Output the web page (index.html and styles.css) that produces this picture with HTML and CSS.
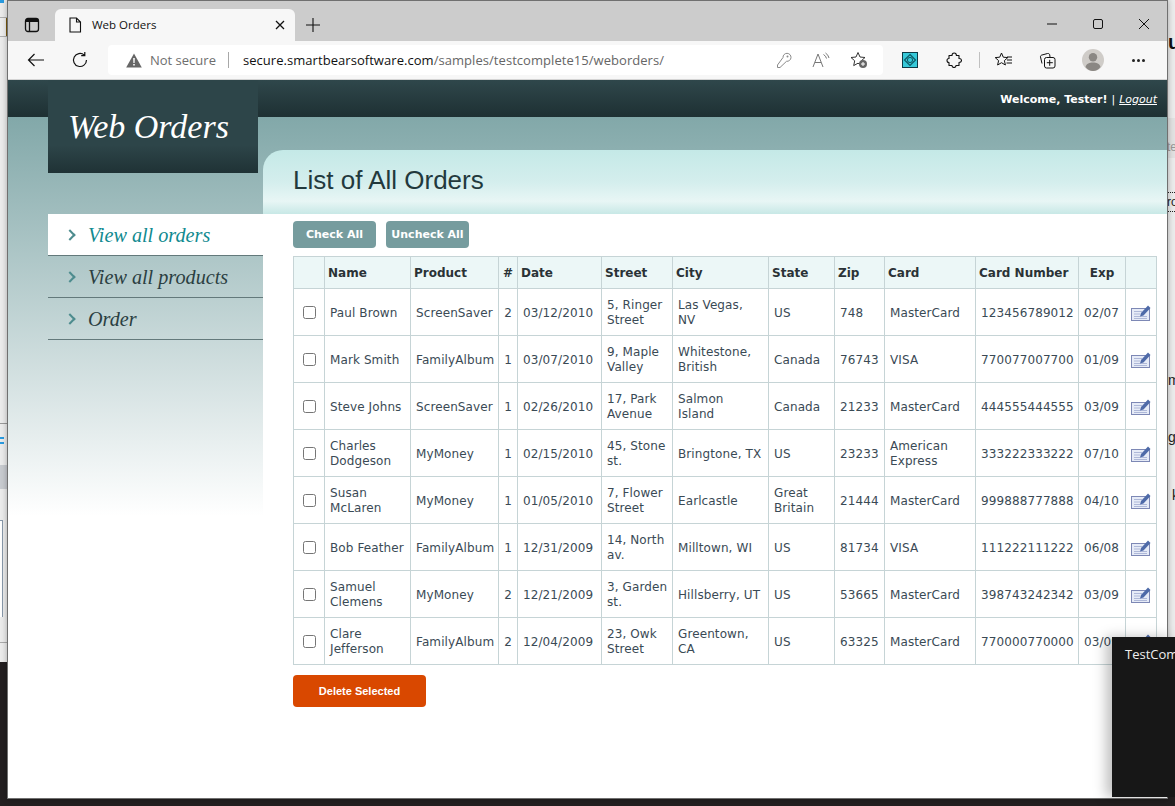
FILE: index.html
```html
<!DOCTYPE html>
<html lang="en">
<head>
<meta charset="utf-8">
<title>Web Orders</title>
<link rel="stylesheet" href="styles.css">
</head>
<body>
<div class="desktop">
  <div class="left-sliver">
    <span class="ls-blue"></span>
    <span class="ls-box"></span>
    <span class="ls-line"></span>
    <span class="ls-lines"></span>
    <span class="ls-band"></span>
    <span class="ls-frame"></span>
    <span class="ls-line2"></span>
  </div>
  <div class="right-sliver">
    <span class="rs-u">u</span>
    <span class="rs-band">te</span>
    <span class="rs-box">ro</span>
    <span class="rs-m">m</span>
    <span class="rs-g">g</span>
    <span class="rs-k">k</span>
  </div>
  <div class="window">
    <div class="tabstrip">
      <svg class="ic tabs-ic" viewBox="0 0 16 16" width="16" height="16"><rect x="1.500" y="1.500" width="13" height="13" rx="2.500" fill="none" stroke="#111" stroke-width="1.300"/><path d="M5.500 5v9" stroke="#111" stroke-width="1.300" fill="none"/><path d="M2 2h12v3H2z" fill="#111"/></svg>
      <div class="tab">
        <svg class="ic" viewBox="0 0 14 16" width="14" height="16"><path d="M2 1h6.500L12.500 5v10H2z M8.500 1v4h4" fill="none" stroke="#111" stroke-width="1.100"/></svg>
        <span class="tab-title">Web Orders</span>
        <svg class="ic tab-close" viewBox="0 0 10 10" width="10" height="10"><path d="M1 1l8 8M9 1l-8 8" stroke="#111" stroke-width="1.300"/></svg>
      </div>
      <svg class="ic newtab" viewBox="0 0 14 14" width="14" height="14"><path d="M7 0v14M0 7h14" stroke="#111" stroke-width="1.100"/></svg>
      <div class="winctl">
        <svg viewBox="0 0 12 12" width="12" height="12"><path d="M1 6h10" stroke="#111" stroke-width="1"/></svg>
        <svg viewBox="0 0 12 12" width="12" height="12"><rect x="1.500" y="1.500" width="9" height="9" rx="1.500" fill="none" stroke="#111" stroke-width="1"/></svg>
        <svg viewBox="0 0 12 12" width="12" height="12"><path d="M1 1l10 10M11 1L1 11" stroke="#111" stroke-width="1"/></svg>
      </div>
    </div>
    <div class="toolbar">
      <svg class="ic back" viewBox="0 0 18 14" width="18" height="14"><path d="M17 7H1.500M7.500 1L1.500 7l6 6" fill="none" stroke="#111" stroke-width="1.200"/></svg>
      <svg class="ic reload" viewBox="0 0 18 18" width="18" height="18"><path d="M15.500 9a6.500 6.500 0 1 1-2.200-4.900M13.800 1v3.600h-3.600" fill="none" stroke="#111" stroke-width="1.200"/></svg>
      <div class="addressbar">
        <svg class="ic" viewBox="0 0 16 15" width="16" height="15"><path d="M8 0.500L15.800 14.500H0.200z" fill="#666"/><path d="M7.200 5h1.600l-.2 5H7.400zM7.200 11h1.600v1.600H7.200z" fill="#fff"/></svg>
        <span class="notsecure">Not secure</span>
        <span class="addr-sep"></span>
        <span class="url"><span class="url-host">secure.smartbearsoftware.com</span>/samples/testcomplete15/weborders/</span>
        <span class="addr-icons">
          <svg viewBox="0 0 16 16" width="16" height="16"><path d="M7 5.500a4 4 0 1 1 3.500 3.800L4 15.500H1.500V13z" fill="none" stroke="#8a8a8a"/><circle cx="11.500" cy="4.500" r="1" fill="#8a8a8a"/></svg>
          <svg viewBox="0 0 18 16" width="18" height="16"><path d="M1 15L6 2l5 13M3 10.500h6" fill="none" stroke="#777"/><path d="M11.500 2.500q2.500 1.500 3 4M13.500 1q3 2 3.500 5" fill="none" stroke="#777"/></svg>
          <svg viewBox="0 0 18 18" width="18" height="18"><path d="M8 1.500l2 4.500 5 .5-3.700 3.300 1 4.800L8 12.200 3.700 14.600l1-4.800L1 6.500l5-.5z" fill="none" stroke="#333"/><circle cx="13" cy="13" r="4" fill="#666"/><path d="M13 11v4M11 13h4" stroke="#fff"/></svg>
        </span>
      </div>
      <div class="tools">
        <svg class="t-ext" viewBox="0 0 16 16" width="16" height="16"><rect x=".5" y=".5" width="15" height="15" fill="#36c9d9" stroke="#0c3a46"/><path d="M8 2.500L13.500 8 8 13.500 2.500 8z" fill="none" stroke="#0c5a66" stroke-width="1.200"/><circle cx="8" cy="8" r="2.600" fill="none" stroke="#0c5a66"/></svg>
        <svg class="t-puzzle" viewBox="0 0 16 16" width="16" height="16"><path d="M3 3.500h3c0-1.500 1-2.500 2.200-2.500s2.200 1 2.200 2.500h2.600v3c1.500 0 2.500.8 2.500 2s-1 2-2.500 2v3h-3c0 1.200-.8 2-2 2s-2-.8-2-2H3v-3c-1 0-2-.8-2-2s1-2 2-2z" fill="none" stroke="#111" stroke-width="1.100" stroke-linejoin="round"/></svg>
        <span class="tool-sep"></span>
        <svg class="t-fav" viewBox="0 0 18 16" width="18" height="16"><path d="M6.500 1l1.800 4.200 4.500.4-3.400 3 1 4.400-3.900-2.300L2.600 13l1-4.400L.2 5.600l4.500-.4z" fill="none" stroke="#111"/><path d="M12 5h5M12 8h5M11.500 11h5.500" stroke="#111"/></svg>
        <svg class="t-coll" viewBox="0 0 17 17" width="17" height="17"><path d="M3 11.500L1.500 5C1.300 4 2 3.200 3 3l5.500-1.500c1-.2 2 .3 2.200 1.300L11 5" fill="none" stroke="#111"/><rect x="5.500" y="5.500" width="10.500" height="10.500" rx="2" fill="none" stroke="#111"/><path d="M10.700 7.800v6M7.800 10.700h6" stroke="#111"/></svg>
        <span class="avatar"><svg viewBox="0 0 22 22" width="22" height="22"><circle cx="11" cy="11" r="11" fill="#cfccc8"/><circle cx="11" cy="8.300" r="4.200" fill="#8a8783"/><path d="M3.500 18c1-3.500 4-4.500 7.500-4.500s6.500 1 7.500 4.500c-2 2.700-4.500 4-7.500 4s-5.500-1.300-7.500-4z" fill="#8a8783"/></svg></span>
        <span class="more"><i></i><i></i><i></i></span>
      </div>
    </div>
    <div class="page">
      <div class="topbar">
        <span class="welcome">Welcome, Tester!</span>
        <span class="bar-sep">|</span>
        <a class="logout">Logout</a>
      </div>
      <div class="page-body">
        <aside class="side">
          <div class="logo">Web Orders</div>
          <ul class="menu">
            <li class="current"><span class="chev"></span>View all orders</li>
            <li><span class="chev"></span>View all products</li>
            <li><span class="chev"></span>Order</li>
          </ul>
        </aside>
        <main class="main">
          <h1 class="heading">List of All Orders</h1>
          <div class="content">
            <div class="btn-row">
              <a class="btn">Check All</a>
              <a class="btn">Uncheck All</a>
            </div>
            <table class="orders">
              <thead>
                <tr><th></th><th>Name</th><th>Product</th><th class="ctr">#</th><th>Date</th><th>Street</th><th>City</th><th>State</th><th>Zip</th><th>Card</th><th>Card Number</th><th class="ctr">Exp</th><th></th></tr>
              </thead>
              <tbody>
                <tr><td class="ck"><input type="checkbox"></td><td>Paul Brown</td><td>ScreenSaver</td><td class="ctr">2</td><td>03/12/2010</td><td>5, Ringer Street</td><td class="city">Las Vegas, NV</td><td>US</td><td>748</td><td>MasterCard</td><td>123456789012</td><td>02/07</td><td class="ed"><svg class="edit" viewBox="0 0 20 17" width="20" height="17"><use href="#edit-ic"/></svg></td></tr>
                <tr><td class="ck"><input type="checkbox"></td><td>Mark Smith</td><td>FamilyAlbum</td><td class="ctr">1</td><td>03/07/2010</td><td>9, Maple Valley</td><td class="city">Whitestone, British</td><td>Canada</td><td>76743</td><td>VISA</td><td>770077007700</td><td>01/09</td><td class="ed"><svg class="edit" viewBox="0 0 20 17" width="20" height="17"><use href="#edit-ic"/></svg></td></tr>
                <tr><td class="ck"><input type="checkbox"></td><td>Steve Johns</td><td>ScreenSaver</td><td class="ctr">1</td><td>02/26/2010</td><td>17, Park Avenue</td><td class="city">Salmon Island</td><td>Canada</td><td>21233</td><td>MasterCard</td><td>444555444555</td><td>03/09</td><td class="ed"><svg class="edit" viewBox="0 0 20 17" width="20" height="17"><use href="#edit-ic"/></svg></td></tr>
                <tr><td class="ck"><input type="checkbox"></td><td>Charles Dodgeson</td><td>MyMoney</td><td class="ctr">1</td><td>02/15/2010</td><td>45, Stone st.</td><td class="city">Bringtone, TX</td><td>US</td><td>23233</td><td>American Express</td><td>333222333222</td><td>07/10</td><td class="ed"><svg class="edit" viewBox="0 0 20 17" width="20" height="17"><use href="#edit-ic"/></svg></td></tr>
                <tr><td class="ck"><input type="checkbox"></td><td>Susan McLaren</td><td>MyMoney</td><td class="ctr">1</td><td>01/05/2010</td><td>7, Flower Street</td><td class="city">Earlcastle</td><td>Great Britain</td><td>21444</td><td>MasterCard</td><td>999888777888</td><td>04/10</td><td class="ed"><svg class="edit" viewBox="0 0 20 17" width="20" height="17"><use href="#edit-ic"/></svg></td></tr>
                <tr><td class="ck"><input type="checkbox"></td><td>Bob Feather</td><td>FamilyAlbum</td><td class="ctr">1</td><td>12/31/2009</td><td>14, North av.</td><td class="city">Milltown, WI</td><td>US</td><td>81734</td><td>VISA</td><td>111222111222</td><td>06/08</td><td class="ed"><svg class="edit" viewBox="0 0 20 17" width="20" height="17"><use href="#edit-ic"/></svg></td></tr>
                <tr><td class="ck"><input type="checkbox"></td><td>Samuel Clemens</td><td>MyMoney</td><td class="ctr">2</td><td>12/21/2009</td><td>3, Garden st.</td><td class="city">Hillsberry, UT</td><td>US</td><td>53665</td><td>MasterCard</td><td>398743242342</td><td>03/09</td><td class="ed"><svg class="edit" viewBox="0 0 20 17" width="20" height="17"><use href="#edit-ic"/></svg></td></tr>
                <tr><td class="ck"><input type="checkbox"></td><td>Clare Jefferson</td><td>FamilyAlbum</td><td class="ctr">2</td><td>12/04/2009</td><td>23, Owk Street</td><td class="city">Greentown, CA</td><td>US</td><td>63325</td><td>MasterCard</td><td>770000770000</td><td>03/09</td><td class="ed"><svg class="edit" viewBox="0 0 20 17" width="20" height="17"><use href="#edit-ic"/></svg></td></tr>
              </tbody>
            </table>
            <a class="btn-delete">Delete Selected</a>
          </div>
        </main>
      </div>
    </div>
    <svg class="defs" width="0" height="0"><defs><g id="edit-ic"><rect x=".5" y="4.500" width="18" height="12" fill="#e6ebf7" stroke="#7d88b5"/><path d="M3 7.500h8M3 10h6M3 12.500h13M3 14.500h13" stroke="#aeb8d8"/><path d="M9 12.500l1-3.500 7-7.500 2.500 2.500-7 7.500z" fill="#4e6aa8"/></g></defs></svg>
  </div>
  <div class="toast">TestCom</div>
</div>
</body>
</html>
```

FILE: styles.css
```css
* { box-sizing: border-box; }
html, body { margin: 0; padding: 0; }
body { width: 1175px; height: 806px; overflow: hidden; }
.desktop { position: relative; width: 1175px; height: 806px; background: #231f20; overflow: hidden; font-family: "DejaVu Sans", sans-serif; }

.left-sliver { position: absolute; left: 0; top: 0; width: 8px; height: 662px; background: #ececec; overflow: hidden; }
.left-sliver span { position: absolute; display: block; }
.ls-blue { left: 0; top: 0; width: 4px; height: 3px; background: #2a9be0; }
.ls-box { left: 0; top: 17px; width: 8px; height: 20px; border: 1px solid #b0b0b0; border-left: 0; border-right: 0; background: linear-gradient(90deg, #eee 70%, #7a5a10 70%, #7a5a10 90%, #eee 90%); }
.ls-line { left: 0; top: 423px; width: 8px; height: 1px; background: #999; }
.ls-lines { left: 0; top: 437px; width: 4px; height: 7px; border-top: 2px solid #2a9be0; border-bottom: 2px solid #2a9be0; }
.ls-band { left: 0; top: 465px; width: 8px; height: 24px; background: #c8cbd0; }
.ls-frame { left: 0; top: 520px; width: 3px; height: 97px; border-right: 1px solid #8898aa; border-top: 1px solid #8898aa; background: #fff; }
.ls-line2 { left: 0; top: 642px; width: 8px; height: 1px; background: #aaa; }

.right-sliver { position: absolute; right: 0; top: 0; width: 8px; height: 640px; background: #ececec; overflow: hidden; font: 14px/16px "Liberation Sans", sans-serif; color: #222; }
.right-sliver span { position: absolute; display: block; white-space: nowrap; }
.rs-u { left: 1px; top: 32px; font: bold 20px/20px "Liberation Sans", sans-serif; color: #111; }
.rs-band { left: 0; top: 118px; width: 8px; height: 40px; padding-top: 21px; background: #e2e2e2; color: #999; font-size: 12px; }
.rs-box { left: 0; top: 192px; width: 8px; height: 20px; border-top: 1px dotted #222; border-bottom: 1px dotted #222; font-size: 12px; line-height: 18px; }
.rs-m { left: 1px; top: 372px; }
.rs-g { left: 1px; top: 429px; }
.rs-k { left: 5px; top: 487px; }

.window { position: absolute; left: 8px; top: 1px; width: 1159px; height: 797px; background: #fff; display: flex; flex-direction: column; overflow: hidden; box-shadow: 0 0 0 1px #707070, 0 0 6px 1px rgba(0,0,0,.3); }
.defs { position: absolute; }
.ic { flex: none; display: block; }

.tabstrip { height: 40px; background: #cccccc; display: flex; align-items: flex-end; flex: none; padding-left: 47px; position: relative; }
.tabs-ic { position: absolute; left: 16px; top: 16px; }
.tab { width: 240px; height: 32px; background: #f7f7f7; border-radius: 6px 6px 0 0; display: flex; align-items: center; padding: 0 10px 0 13px; font: 11.500px "Open Sans", sans-serif; color: #111; }
.tab-title { margin: -2px 0 0 10px; flex: 1; }
.newtab { margin: 0 0 9px 11px; }
.winctl { margin-left: auto; display: flex; gap: 34px; padding: 0 17px 11px 0; }
.winctl svg { display: block; }

.toolbar { height: 39px; background: #f7f7f7; border-bottom: 1px solid #d4d4d4; display: flex; align-items: center; flex: none; padding: 0 0 0 19px; }
.reload { margin-left: 26px; }
.addressbar { margin-left: 19px; width: 775px; height: 30px; background: #fff; border-radius: 4px; display: flex; align-items: center; padding: 0 15px 0 18px; }
.notsecure { margin-left: 8px; font: 13px "Open Sans", sans-serif; color: #6e6e6e; }
.addr-sep { width: 1px; height: 16px; background: #a8a8a8; margin: 0 14px 0 12px; }
.url { font: 13px "Open Sans", sans-serif; color: #666; white-space: nowrap; letter-spacing: .05px; }
.url-host { color: #111; }
.addr-icons { margin-left: auto; display: flex; align-items: center; gap: 20px; }
.addr-icons svg { display: block; }
.tools { display: flex; align-items: center; flex: 1; padding-left: 19px; }
.tools svg { display: block; flex: none; }
.t-puzzle { margin-left: 28px; }
.tool-sep { width: 1px; height: 16px; background: #c0c0c0; margin-left: 17px; }
.t-fav { margin-left: 15px; }
.t-coll { margin-left: 26px; }
.avatar { margin-left: 26px; }
.more { margin-left: 28px; display: flex; gap: 2px; }
.more i { width: 3px; height: 3px; border-radius: 50%; background: #222; }

.page { flex: 1; display: flex; flex-direction: column; position: relative; background: linear-gradient(#82a8a9 37px, #ffffff 436px); min-height: 0; }
.topbar { height: 37px; flex: none; background: linear-gradient(#2f474b, #1e3033); display: flex; align-items: center; justify-content: flex-end; gap: 4px; padding: 2px 10px 0 0; font: bold 11px "DejaVu Sans", sans-serif; color: #fff; }
.bar-sep { font-weight: normal; }
.logout { font-weight: normal; font-style: italic; text-decoration: underline; }
.page-body { flex: 1; display: flex; min-height: 0; padding-left: 40px; }
.side { width: 215px; flex: none; position: relative; }
.logo { position: absolute; top: -37px; left: 0; width: 210px; height: 93px; padding: 30px 0 0 20px; background: linear-gradient(#2d4549 70%, #1f3235); color: #fff; font: italic 34px/34px "Liberation Serif", serif; }
.menu { list-style: none; margin: 97px 0 0; padding: 0; font: italic 20.200px/41px "Liberation Serif", serif; color: #2b3f42; }
.menu li { height: 42px; border-bottom: 1px solid #63797b; display: flex; align-items: center; padding: 1px 0 0 18px; }
.menu .current { background: #fff; color: #108a90; }
.chev { width: 8px; height: 8px; border-top: 2px solid #4d8c8e; border-right: 2px solid #4d8c8e; transform: rotate(45deg); margin: 0 14px 0 0; flex: none; }
.main { flex: 1; min-width: 0; display: flex; flex-direction: column; margin-top: 33px; }
.heading { height: 64px; flex: none; margin: 0; padding: 15px 0 0 30px; font: normal 26px/30px "Liberation Sans", sans-serif; color: #22393d; border-radius: 20px 0 0 0; background: linear-gradient(#c4e9e7 0, #d4eeed 50%, #e8f6f5 80%, #c8e8e6 100%); }
.content { flex: 1; background: #fff; padding: 7px 10px 0 30px; }
.btn-row { display: flex; gap: 10px; height: 35px; align-items: flex-start; }
.btn { width: 83px; height: 27px; background: #769c9e; color: #fff; border-radius: 4px; font: bold 11px/27px "DejaVu Sans", sans-serif; text-align: center; }
.orders { table-layout: fixed; border-collapse: collapse; width: 863px; font-size: 12px; color: #3a4a55; }
.orders th, .orders td { border: 1px solid #c6d4d6; padding: 2px 3px 0 5px; text-align: left; overflow: hidden; letter-spacing: .1px; }
.orders th { height: 32px; background: #ecf7f7; color: #2a3236; font-weight: bold; font-size: 12px; padding: 0 3px; letter-spacing: 0; }
.orders td { height: 47px; line-height: 15px; }
.orders td.city { padding-right: 6px; }
.orders th.ctr { text-align: center; padding: 0; }
.orders td.ctr { text-align: center; padding: 2px 0 0; }
.orders th:nth-child(1) { width: 31px; }
.orders th:nth-child(2) { width: 86px; }
.orders th:nth-child(3) { width: 88px; }
.orders th:nth-child(4) { width: 19px; }
.orders th:nth-child(5) { width: 84px; }
.orders th:nth-child(6) { width: 71px; }
.orders th:nth-child(7) { width: 96px; }
.orders th:nth-child(8) { width: 66px; }
.orders th:nth-child(9) { width: 50px; }
.orders th:nth-child(10) { width: 91px; }
.orders th:nth-child(11) { width: 103px; }
.orders th:nth-child(12) { width: 47px; }
.orders th:nth-child(13) { width: 31px; }
.orders td.ck { text-align: center; padding: 0; }
.ck input { width: 13px; height: 13px; margin: 0; display: inline-block; vertical-align: middle; }
.orders td.ed { padding: 0; text-align: center; }
.edit { display: inline-block; vertical-align: middle; }
.btn-delete { display: block; width: 133px; height: 32px; margin-top: 10px; background: #d94800; color: #fff; border-radius: 4px; font: bold 11px/32px "Liberation Sans", sans-serif; text-align: center; }
.toast { position: absolute; left: 1112px; top: 637px; width: 63px; height: 160px; background: #171717; color: #eee; font: 13px/34px "Open Sans", sans-serif; padding-left: 13px; box-shadow: -6px 0 12px rgba(0,0,0,.25); overflow: hidden; white-space: nowrap; }
```
